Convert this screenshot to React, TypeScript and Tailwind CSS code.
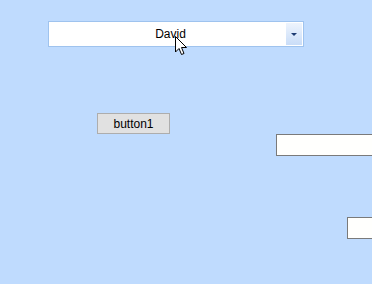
import React from "react";

function Cursor() {
  return (
    <svg
      className="absolute left-[175px] top-[36px]"
      width="13"
      height="20"
      viewBox="0 0 13 20"
    >
      <path
        d="M0.5 0.5 L0.5 16 L4 12.5 L6.5 18.5 L9 17.5 L6.5 11.5 L11.5 11.5 Z"
        fill="#fff"
        stroke="#000"
        strokeWidth="1"
        strokeLinejoin="miter"
      />
    </svg>
  );
}

export default function App() {
  return (
    <div className="relative w-[372px] h-[284px] overflow-hidden bg-[#bfdbfe] font-['Liberation_Sans',Arial,sans-serif] text-[12px] text-black">
      {/* combo box */}
      <div className="absolute left-[48px] top-[21px] w-[256px] h-[26px] flex border border-[#9fc3ee] bg-white">
        <div className="flex-1 flex items-center justify-center pl-[6px]">David</div>
        <div className="w-[16px] my-px mr-px flex items-center justify-center bg-gradient-to-b from-[#eef4fd] to-[#c9ddf8]">
          <svg width="6" height="3" viewBox="0 0 6 3">
            <path d="M0 0 H6 L3 3 Z" fill="#1d3b72" />
          </svg>
        </div>
      </div>

      {/* button */}
      <div className="absolute left-[97px] top-[113px] w-[73px] h-[21px] flex items-center justify-center border border-[#adadad] bg-[#e1e1e1]">
        button1
      </div>

      {/* text boxes */}
      <div className="absolute left-[276px] top-[134px] w-[120px] h-[22px] border border-[#7a7a7a] bg-[#fffffd]" />
      <div className="absolute left-[347px] top-[217px] w-[60px] h-[22px] border border-[#7a7a7a] bg-[#fffffd]" />

      <Cursor />
    </div>
  );
}
